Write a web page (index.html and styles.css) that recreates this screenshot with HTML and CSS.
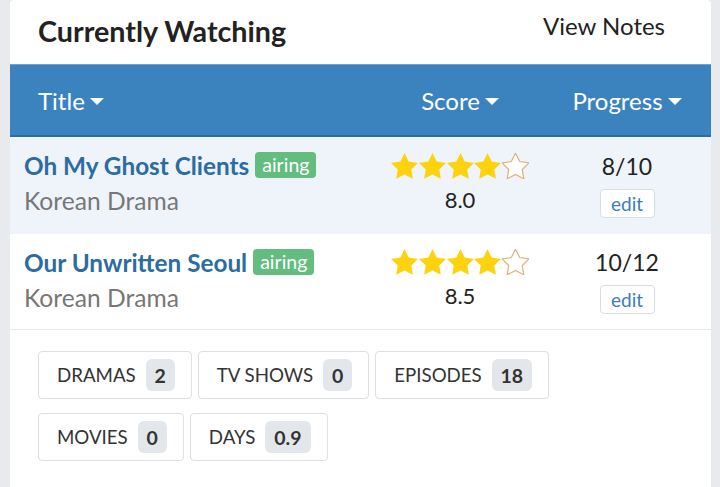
FILE: index.html
```html
<!DOCTYPE html>
<html>
<head>
<meta charset="utf-8">
<link rel="stylesheet" href="styles.css">
</head>
<body>
<div class="card">
  <div class="top">
    <h1 class="title">Currently Watching</h1>
    <a class="notes">View Notes</a>
  </div>
  <div class="thead">
    <div class="th th-title">Title<span class="caret"></span></div>
    <div class="th th-center">Score<span class="caret"></span></div>
    <div class="th th-center">Progress<span class="caret"></span></div>
  </div>
  <div class="row row-alt">
    <div class="cell-title">
      <div class="name"><a class="link">Oh My Ghost Clients</a><span class="tag">airing</span></div>
      <div class="sub">Korean Drama</div>
    </div>
    <div class="cell-center">
      <div class="stars">
        <svg class="star full" viewBox="2 2 20 19.1"><path d="M12 2l3.09 6.26L22 9.27l-5 4.87 1.18 6.88L12 17.77l-6.18 3.25L7 14.14 2 9.27l6.91-1.01L12 2z"/></svg>
        <svg class="star full" viewBox="2 2 20 19.1"><path d="M12 2l3.09 6.26L22 9.27l-5 4.87 1.18 6.88L12 17.77l-6.18 3.25L7 14.14 2 9.27l6.91-1.01L12 2z"/></svg>
        <svg class="star full" viewBox="2 2 20 19.1"><path d="M12 2l3.09 6.26L22 9.27l-5 4.87 1.18 6.88L12 17.77l-6.18 3.25L7 14.14 2 9.27l6.91-1.01L12 2z"/></svg>
        <svg class="star full" viewBox="2 2 20 19.1"><path d="M12 2l3.09 6.26L22 9.27l-5 4.87 1.18 6.88L12 17.77l-6.18 3.25L7 14.14 2 9.27l6.91-1.01L12 2z"/></svg>
        <svg class="star empty" viewBox="2 2 20 19.1"><path d="M12 2l3.09 6.26L22 9.27l-5 4.87 1.18 6.88L12 17.77l-6.18 3.25L7 14.14 2 9.27l6.91-1.01L12 2z"/></svg>
      </div>
      <div class="score">8.0</div>
    </div>
    <div class="cell-center">
      <div class="prog">8/10</div>
      <a class="edit">edit</a>
    </div>
  </div>
  <div class="row">
    <div class="cell-title">
      <div class="name"><a class="link">Our Unwritten Seoul</a><span class="tag">airing</span></div>
      <div class="sub">Korean Drama</div>
    </div>
    <div class="cell-center">
      <div class="stars">
        <svg class="star full" viewBox="2 2 20 19.1"><path d="M12 2l3.09 6.26L22 9.27l-5 4.87 1.18 6.88L12 17.77l-6.18 3.25L7 14.14 2 9.27l6.91-1.01L12 2z"/></svg>
        <svg class="star full" viewBox="2 2 20 19.1"><path d="M12 2l3.09 6.26L22 9.27l-5 4.87 1.18 6.88L12 17.77l-6.18 3.25L7 14.14 2 9.27l6.91-1.01L12 2z"/></svg>
        <svg class="star full" viewBox="2 2 20 19.1"><path d="M12 2l3.09 6.26L22 9.27l-5 4.87 1.18 6.88L12 17.77l-6.18 3.25L7 14.14 2 9.27l6.91-1.01L12 2z"/></svg>
        <svg class="star full" viewBox="2 2 20 19.1"><path d="M12 2l3.09 6.26L22 9.27l-5 4.87 1.18 6.88L12 17.77l-6.18 3.25L7 14.14 2 9.27l6.91-1.01L12 2z"/></svg>
        <svg class="star empty" viewBox="2 2 20 19.1"><path d="M12 2l3.09 6.26L22 9.27l-5 4.87 1.18 6.88L12 17.77l-6.18 3.25L7 14.14 2 9.27l6.91-1.01L12 2z"/></svg>
      </div>
      <div class="score">8.5</div>
    </div>
    <div class="cell-center">
      <div class="prog">10/12</div>
      <a class="edit">edit</a>
    </div>
  </div>
  <div class="stats">
    <div class="stat-row">
      <div class="stat">DRAMAS <span class="count">2</span></div>
      <div class="stat">TV SHOWS <span class="count">0</span></div>
      <div class="stat">EPISODES <span class="count">18</span></div>
    </div>
    <div class="stat-row">
      <div class="stat">MOVIES <span class="count">0</span></div>
      <div class="stat">DAYS <span class="count">0.9</span></div>
    </div>
  </div>
</div>
</body>
</html>
```

FILE: styles.css
```css
* { box-sizing: border-box; }
html, body {
  margin: 0;
  padding: 0;
  background: #e8eaed;
  font-family: Lato, "Open Sans", sans-serif;
  color: #222;
  overflow: hidden;
}
.card {
  margin-left: 10px;
  width: 701px;
  height: 487px;
  background: #fff;
  border-radius: 4px 4px 0 0;
}
.top {
  height: 64px;
  display: flex;
  justify-content: space-between;
  align-items: flex-start;
  padding: 0 46px 0 28px;
}
.title {
  margin: 14px 0 0;
  font-size: 28.7px;
  line-height: 1.2;
  font-weight: 700;
  color: #222;
}
.notes {
  margin-top: 12px;
  font-size: 24px;
  line-height: 1.2;
  color: #222;
}
.thead {
  height: 73px;
  background: #3b83be;
  border-top: 1px solid #6fa3cf;
  border-bottom: 2px solid #2d6ca2;
  display: grid;
  grid-template-columns: 1fr 150px 120px;
  column-gap: 32px;
  align-items: center;
  padding: 0 24px 0 28px;
  color: #fff;
  font-size: 24px;
}
.th { display: flex; align-items: center; white-space: nowrap; }
.th-center { justify-content: center; }
.caret {
  display: inline-block;
  width: 0;
  height: 0;
  margin-left: 5px;
  margin-top: 2px;
  border-left: 7px solid transparent;
  border-right: 7px solid transparent;
  border-top: 7px solid #fff;
}
.row {
  height: 96px;
  display: grid;
  grid-template-columns: 1fr 150px 120px;
  column-gap: 32px;
  padding: 0 24px 0 14px;
  border-bottom: 1px solid #e6e8eb;
}
.row-alt { background: #eef4fa; height: 97px; border-bottom: 0; }
.cell-title { padding-top: 12px; }
.name { display: flex; align-items: center; height: 32px; }
.link {
  font-size: 24.3px;
  font-weight: 700;
  color: #2b6ca2;
}
.tag {
  margin-left: 6px;
  background: #62bd7f;
  color: #fff;
  font-size: 19.5px;
  line-height: 26px;
  height: 26px;
  padding: 0 7px;
  border-radius: 4px;
}
.sub {
  margin-top: 5px;
  font-size: 24.6px;
  color: #777;
}
.cell-center {
  display: flex;
  flex-direction: column;
  align-items: center;
  padding-top: 15px;
}
.stars { display: flex; gap: 0.6px; height: 28px; align-items: center; }
.star { width: 27px; height: 26px; }
.star.full path { fill: #ffd20e; }
.star.empty path { fill: #fff; stroke: #e1b27b; stroke-width: 0.9; }
.score {
  margin-top: 6px;
  font-size: 22px;
  color: #222;
}
.prog {
  font-size: 23px;
  line-height: 28px;
  color: #222;
}
.edit {
  margin-top: 9px;
  width: 55px;
  height: 29px;
  border: 1px solid #d8dde3;
  border-radius: 4px;
  background: #fff;
  color: #3b7db4;
  font-size: 19px;
  display: flex;
  align-items: center;
  justify-content: center;
}
.row:not(.row-alt) .cell-center { padding-top: 14px; }
.stats {
  display: flex;
  flex-direction: column;
  gap: 14px;
  padding: 21px 28px 0;
}
.stat-row { display: flex; gap: 6px; }
.stat {
  height: 48px;
  display: flex;
  align-items: center;
  padding: 0 16px 0 18px;
  border: 1px solid #dcdfe3;
  border-radius: 4px;
  font-size: 18.7px;
  color: #333;
  white-space: pre;
}
.count {
  margin-left: 5px;
  min-width: 29px;
  height: 32px;
  padding: 0 9px;
  border-radius: 6px;
  background: #e3e6eb;
  font-weight: 700;
  font-size: 19.5px;
  display: flex;
  align-items: center;
  justify-content: center;
}
```
